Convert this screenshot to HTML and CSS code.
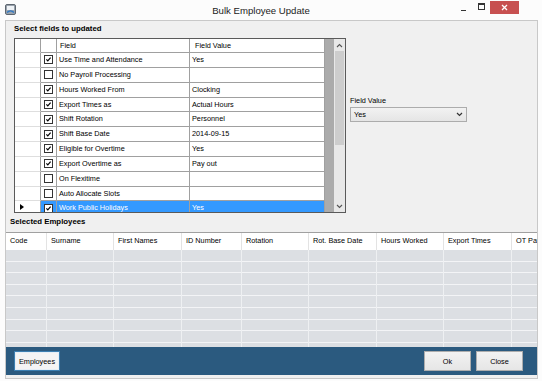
FILE: index.html
```html
<!DOCTYPE html>
<html lang="en">
<head>
    <meta charset="UTF-8">
    <title>Bulk Employee Update</title>
    <link rel="stylesheet" href="styles.css">
</head>
<body>
    <div class="titlebar">
        <svg class="app-icon" width="11" height="11" viewBox="0 0 11 11">
            <rect x="0.5" y="0.5" width="10" height="10" rx="1.5" fill="#9aa3ad" stroke="#5d6670"/>
            <rect x="2" y="2" width="7" height="4" fill="#eef2f6"/>
            <path d="M2 8.5 C4 6.5 7 6.5 9 8.5" stroke="#2f78c4" stroke-width="1.4" fill="none"/>
        </svg>
        <div class="title">Bulk Employee Update</div>
        <div class="controls">
            <span class="ctl-min"></span>
            <span class="ctl-max"></span>
            <span class="ctl-close">
                <svg width="7" height="7" viewBox="0 0 7 7"><path d="M1 1 L6 6 M6 1 L1 6" stroke="#fff" stroke-width="1.3"/></svg>
            </span>
        </div>
    </div>

    <div class="window-body">
        <div class="fields">
            <div class="group-label">Select fields to updated</div>
            <div class="top">
                <div class="grid">
                    <div class="grid-main">
                        <div class="row head">
                            <div class="cell rh"></div>
                            <div class="cell"></div>
                            <div class="cell hd">Field</div>
                            <div class="cell hd hd-val">Field Value</div>
                        </div>
                        <div class="row">
                            <div class="cell rh"></div>
                            <div class="cell chk"><span class="box on"><svg viewBox="0 0 9 9"><path d="M1.8 4.4 L3.6 6.4 L7.2 2.2"/></svg></span></div>
                            <div class="cell">Use Time and Attendance</div>
                            <div class="cell">Yes</div>
                        </div>
                        <div class="row">
                            <div class="cell rh"></div>
                            <div class="cell chk"><span class="box"></span></div>
                            <div class="cell">No Payroll Processing</div>
                            <div class="cell"></div>
                        </div>
                        <div class="row">
                            <div class="cell rh"></div>
                            <div class="cell chk"><span class="box on"><svg viewBox="0 0 9 9"><path d="M1.8 4.4 L3.6 6.4 L7.2 2.2"/></svg></span></div>
                            <div class="cell">Hours Worked From</div>
                            <div class="cell">Clocking</div>
                        </div>
                        <div class="row">
                            <div class="cell rh"></div>
                            <div class="cell chk"><span class="box on"><svg viewBox="0 0 9 9"><path d="M1.8 4.4 L3.6 6.4 L7.2 2.2"/></svg></span></div>
                            <div class="cell">Export Times as</div>
                            <div class="cell">Actual Hours</div>
                        </div>
                        <div class="row">
                            <div class="cell rh"></div>
                            <div class="cell chk"><span class="box on"><svg viewBox="0 0 9 9"><path d="M1.8 4.4 L3.6 6.4 L7.2 2.2"/></svg></span></div>
                            <div class="cell">Shift Rotation</div>
                            <div class="cell">Personnel</div>
                        </div>
                        <div class="row">
                            <div class="cell rh"></div>
                            <div class="cell chk"><span class="box on"><svg viewBox="0 0 9 9"><path d="M1.8 4.4 L3.6 6.4 L7.2 2.2"/></svg></span></div>
                            <div class="cell">Shift Base Date</div>
                            <div class="cell">2014-09-15</div>
                        </div>
                        <div class="row">
                            <div class="cell rh"></div>
                            <div class="cell chk"><span class="box on"><svg viewBox="0 0 9 9"><path d="M1.8 4.4 L3.6 6.4 L7.2 2.2"/></svg></span></div>
                            <div class="cell">Eligible for Overtime</div>
                            <div class="cell">Yes</div>
                        </div>
                        <div class="row">
                            <div class="cell rh"></div>
                            <div class="cell chk"><span class="box on"><svg viewBox="0 0 9 9"><path d="M1.8 4.4 L3.6 6.4 L7.2 2.2"/></svg></span></div>
                            <div class="cell">Export Overtime as</div>
                            <div class="cell">Pay out</div>
                        </div>
                        <div class="row">
                            <div class="cell rh"></div>
                            <div class="cell chk"><span class="box"></span></div>
                            <div class="cell">On Flexitime</div>
                            <div class="cell"></div>
                        </div>
                        <div class="row">
                            <div class="cell rh"></div>
                            <div class="cell chk"><span class="box"></span></div>
                            <div class="cell">Auto Allocate Slots</div>
                            <div class="cell"></div>
                        </div>
                        <div class="row selected">
                            <div class="cell rh"><span class="current"></span></div>
                            <div class="cell chk"><span class="box on"><svg viewBox="0 0 9 9"><path d="M1.8 4.4 L3.6 6.4 L7.2 2.2"/></svg></span></div>
                            <div class="cell">Work Public Holidays</div>
                            <div class="cell">Yes</div>
                        </div>
                    </div>
                    <div class="scrollbar">
                        <div class="sb-btn">
                            <svg width="7" height="5" viewBox="0 0 7 5"><path d="M1 4 L3.5 1.5 L6 4" stroke="#555" stroke-width="1.1" fill="none"/></svg>
                        </div>
                        <div class="sb-thumb"></div>
                        <div class="sb-track"></div>
                        <div class="sb-btn">
                            <svg width="7" height="5" viewBox="0 0 7 5"><path d="M1 1 L3.5 3.5 L6 1" stroke="#555" stroke-width="1.1" fill="none"/></svg>
                        </div>
                    </div>
                </div>

                <div class="side">
                    <div class="side-label">Field Value</div>
                    <div class="combo">
                        <span>Yes</span>
                        <svg width="7" height="5" viewBox="0 0 7 5"><path d="M1 1 L3.5 3.5 L6 1" stroke="#333" stroke-width="1.2" fill="none"/></svg>
                    </div>
                </div>
            </div>
        </div>

        <div class="group-label emp-label">Selected Employees</div>
        <div class="emp-grid">
            <div class="col w41"><div class="col-head">Code</div><div class="col-body"></div></div>
            <div class="col w67"><div class="col-head">Surname</div><div class="col-body"></div></div>
            <div class="col w68"><div class="col-head">First Names</div><div class="col-body"></div></div>
            <div class="col w60"><div class="col-head">ID Number</div><div class="col-body"></div></div>
            <div class="col w67"><div class="col-head">Rotation</div><div class="col-body"></div></div>
            <div class="col w68"><div class="col-head">Rot. Base Date</div><div class="col-body"></div></div>
            <div class="col w67"><div class="col-head">Hours Worked</div><div class="col-body"></div></div>
            <div class="col w68"><div class="col-head">Export Times</div><div class="col-body"></div></div>
            <div class="col w68"><div class="col-head">OT Pay</div><div class="col-body"></div></div>
        </div>

        <div class="footer">
            <button class="btn focused">Employees</button>
            <div class="footer-right">
                <button class="btn">Ok</button>
                <button class="btn">Close</button>
            </div>
        </div>
    </div>
</body>
</html>
```

FILE: styles.css
```css
body {
    margin: 0;
    width: 542px;
    height: 381px;
    overflow: hidden;
    background-color: #fcfcfc;
    font-family: "Liberation Sans", Arial, sans-serif;
    font-size: 7.3px;
    color: #000;
}
.titlebar {
    height: 20px;
    display: flex;
    align-items: center;
}
.app-icon {
    margin-left: 5px;
    margin-top: -2px;
}
.title {
    flex: 1;
    padding-left: 51px;
    text-align: center;
    font-size: 9.6px;
    color: #222;
    padding-top: 1px;
}
.controls {
    width: 87px;
    height: 20px;
    display: flex;
    align-items: flex-start;
}
.ctl-min {
    width: 5px;
    height: 1px;
    background-color: #333;
    margin: 10px 0 0 6px;
}
.ctl-max {
    width: 5px;
    height: 4px;
    border: 1px solid #333;
    border-top-width: 2px;
    margin: 3px 0 0 12px;
}
.ctl-close {
    width: 29px;
    height: 13px;
    margin: 1px 0 0 5px;
    background-color: #c75050;
    display: flex;
    align-items: center;
    justify-content: center;
}
.window-body {
    margin: 0 4px 0 5px;
    height: 357px;
    border: 1px solid #c8c8c8;
    background-color: #f0f0f0;
    display: flex;
    flex-direction: column;
}
.fields {
    padding: 3px 0 0 8px;
}
.group-label {
    font-weight: bold;
    font-size: 7.8px;
    line-height: 10px;
    height: 10px;
}
.top {
    display: flex;
    margin-top: 4px;
}
.grid {
    width: 332px;
    height: 175px;
    box-sizing: border-box;
    border: 1px solid #5a5a5a;
    display: flex;
}
.grid-main {
    flex: 1;
    background-color: #ababab;
    overflow: hidden;
}
.row {
    display: grid;
    grid-template-columns: 26px 16px 133px 135px;
    height: 14.85px;
    width: 310px;
}
.row.head {
    height: 14px;
}
.cell {
    box-sizing: border-box;
    background-color: #fff;
    border-right: 1px solid #a0a0a0;
    border-bottom: 1px solid #a0a0a0;
    padding-left: 2px;
    line-height: 13px;
    white-space: nowrap;
    overflow: hidden;
}
.cell.rh {
    border-bottom-color: #dedede;
    position: relative;
}
.head .cell {
    line-height: 13px;
}
.head .hd {
    padding-left: 3px;
}
.head .hd-val {
    padding-left: 5px;
}
.chk {
    padding-left: 3px;
    display: flex;
    align-items: center;
}
.box {
    width: 9px;
    height: 9px;
    box-sizing: border-box;
    border: 1px solid #333;
    background-color: #fff;
    display: block;
}
.box svg {
    display: block;
    width: 7px;
    height: 7px;
    fill: none;
    stroke: #000;
    stroke-width: 1.5;
}
.selected .cell {
    background-color: #3399ff;
    color: #fff;
}
.selected .cell.rh {
    background-color: #fff;
}
.current {
    position: absolute;
    left: 5px;
    top: 3px;
    width: 0;
    height: 0;
    border-top: 3.5px solid transparent;
    border-bottom: 3.5px solid transparent;
    border-left: 4px solid #000;
}
.scrollbar {
    width: 11px;
    background-color: #e8e8e8;
    display: flex;
    flex-direction: column;
}
.sb-btn {
    height: 12px;
    display: flex;
    align-items: center;
    justify-content: center;
}
.sb-thumb {
    height: 94px;
    margin: 0 1px;
    background-color: #cdcdcd;
}
.sb-track {
    flex: 1;
}
.side {
    margin: 58px 0 0 4px;
}
.side-label {
    line-height: 10px;
}
.combo {
    margin-top: 1px;
    width: 117px;
    height: 15px;
    box-sizing: border-box;
    border: 1px solid #acacac;
    background: linear-gradient(#f2f2f2, #e5e5e5);
    display: flex;
    align-items: center;
    justify-content: space-between;
    padding: 0 3px 0 3px;
}
.emp-label {
    margin: 4px 0 5px 4px;
}
.emp-grid {
    height: 115px;
    box-sizing: border-box;
    border-top: 1px solid #a0a0a0;
    display: flex;
    overflow: hidden;
}
.col {
    flex-shrink: 0;
    display: flex;
    flex-direction: column;
    border-right: 1px solid #eef0f2;
    box-sizing: border-box;
}
.w41 { width: 41px; }
.w60 { width: 60px; }
.w67 { width: 67px; }
.w68 { width: 68px; }
.col-head {
    height: 16.5px;
    line-height: 16.5px;
    background-color: #fff;
    padding-left: 4px;
    white-space: nowrap;
    border-right: 1px solid #e3e3e3;
    margin-right: -1px;
}
.col-body {
    flex: 1;
    background: repeating-linear-gradient(to bottom, #dcdfe3 0, #dcdfe3 10.6px, #f3f4f6 10.6px, #f3f4f6 11.6px);
}
.footer {
    height: 28px;
    background-color: #2b5a7f;
    display: flex;
    align-items: center;
    justify-content: space-between;
    padding: 0 14px 0 8px;
}
.footer-right {
    display: flex;
    gap: 5px;
}
.btn {
    width: 47px;
    height: 20px;
    box-sizing: border-box;
    border: 1px solid #adadad;
    background: linear-gradient(#f2f2f2, #e6e6e6);
    font-family: "Liberation Sans", Arial, sans-serif;
    font-size: 7.3px;
    color: #000;
    padding: 0;
}
.btn.focused {
    width: 46px;
    border: 1px solid #3c7fb1;
    background: #f4f4f4;
    box-shadow: inset 0 0 0 1px #e5eef6;
}
```
